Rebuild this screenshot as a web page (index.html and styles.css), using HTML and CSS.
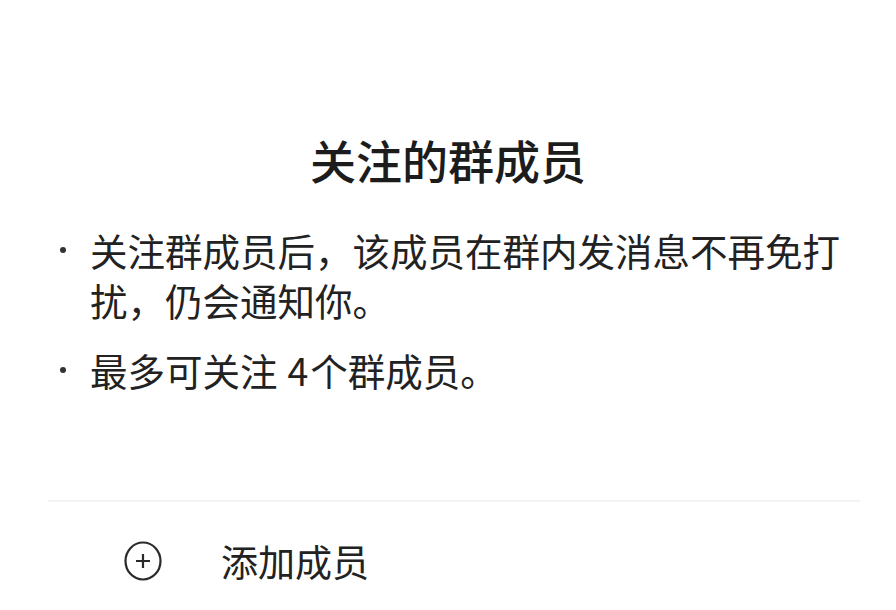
FILE: index.html
```html
<!DOCTYPE html>
<html lang="zh-CN">
<head>
    <meta charset="UTF-8">
    <meta name="viewport" content="width=device-width, initial-scale=1.0">
    <title>关注的群成员</title>
    <link rel="stylesheet" href="styles.css">
</head>
<body>
    <div class="sheet">
        <h1 class="title">关注的群成员</h1>

        <ul class="notes">
            <li>关注群成员后，该成员在群内发消息不再免打扰，仍会通知你。</li>
            <li>最多可关注<span class="num">4</span>个群成员。</li>
        </ul>

        <div class="add-row">
            <span class="add-icon">
                <svg width="38" height="40" viewBox="0 0 38 40">
                    <ellipse cx="19" cy="20" rx="17.5" ry="18.5" fill="none" stroke="#2a2a2a" stroke-width="2.2"/>
                    <path d="M19 13v14M12 20h14" stroke="#2a2a2a" stroke-width="2.2" fill="none"/>
                </svg>
            </span>
            <span class="add-label">添加成员</span>
        </div>
    </div>
</body>
</html>
```

FILE: styles.css
```css
body {
    margin: 0;
    background-color: #ffffff;
    font-family: "Noto Sans CJK SC", "Noto Sans", sans-serif;
    color: #222222;
}

.sheet {
    padding-top: 129px;
}

.title {
    margin: 0;
    font-size: 46px;
    line-height: 60px;
    font-weight: 500;
    text-align: center;
    color: #1c1c1c;
}

/* bullet notes under the title */
.notes {
    list-style: none;
    margin: 36px 0 0;
    padding: 0 40px 0 90px;
    font-size: 37.5px;
    line-height: 50px;
}

.notes li {
    position: relative;
}

.notes li + li {
    margin-top: 20px;
}

.notes li::before {
    content: "";
    position: absolute;
    left: -30px;
    top: 22px;
    width: 6px;
    height: 6px;
    border-radius: 50%;
    background-color: #333333;
}

.num {
    margin: 0 2px 0 10px;
}

/* bottom action row */
.add-row {
    display: flex;
    align-items: center;
    margin: 105px 36px 0 48px;
    padding: 34px 0 0 76px;
    border-top: 2px solid #f3f3f3;
}

.add-icon {
    display: flex;
    width: 38px;
    height: 40px;
}

.add-label {
    margin-left: 59px;
    font-size: 37px;
    line-height: 50px;
}
```
